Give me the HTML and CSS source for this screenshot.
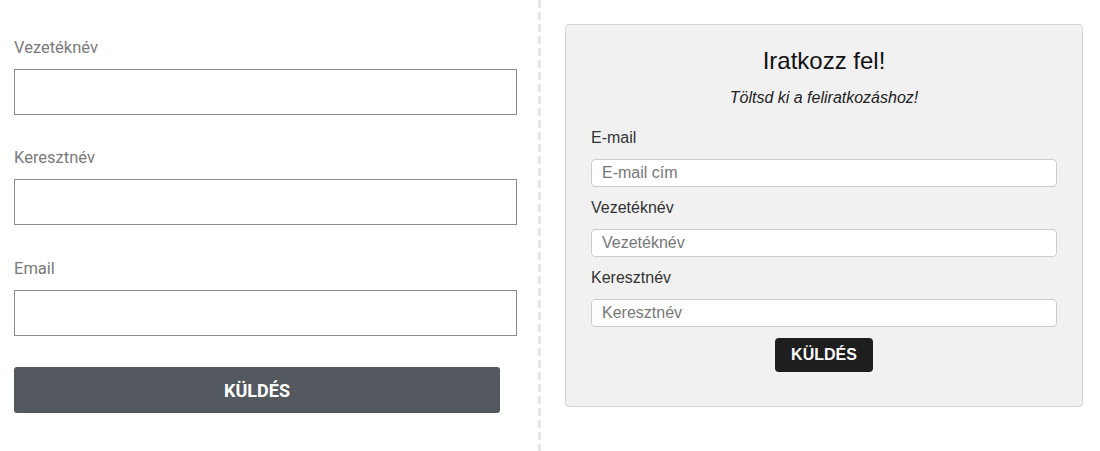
FILE: index.html
```html
<!DOCTYPE html>
<html lang="hu">
<head>
    <meta charset="UTF-8">
    <meta name="viewport" content="width=device-width, initial-scale=1.0">
    <title>Feliratkozás</title>
    <link rel="stylesheet" href="styles.css">
</head>
<body>
    <div class="page">
        <form class="plain-form">
            <div class="field">
                <label for="lastName">Vezetéknév</label>
                <input type="text" id="lastName">
            </div>
            <div class="field">
                <label for="firstName">Keresztnév</label>
                <input type="text" id="firstName">
            </div>
            <div class="field">
                <label for="email">Email</label>
                <input type="email" id="email">
            </div>
            <button type="submit" class="send-btn">KÜLDÉS</button>
        </form>

        <div class="divider"></div>

        <div class="signup-wrap">
            <form class="signup">
                <h2>Iratkozz fel!</h2>
                <p class="lead">Töltsd ki a feliratkozáshoz!</p>

                <label for="suEmail">E-mail</label>
                <input type="email" id="suEmail" placeholder="E-mail cím">

                <label for="suLast">Vezetéknév</label>
                <input type="text" id="suLast" placeholder="Vezetéknév">

                <label for="suFirst">Keresztnév</label>
                <input type="text" id="suFirst" placeholder="Keresztnév">

                <button type="submit" class="signup-btn">KÜLDÉS</button>
            </form>
        </div>
    </div>
</body>
</html>
```

FILE: styles.css
```css
* { box-sizing: border-box; }
body { margin: 0; background: #fff; }
.page { display: flex; min-height: 100vh; }

/* left form */
.plain-form { width: 538px; padding: 36px 21px 0 14px; font-family: Roboto, "Liberation Sans", sans-serif; }
.field { margin-bottom: 31px; }
.field:nth-child(2) { margin-bottom: 32px; }
.field label { display: block; font-size: 16.5px; line-height: 24px; color: #7a7a7a; margin-bottom: 9px; }
.field input { display: block; width: 100%; height: 46px; border: 1px solid #8a8a8a; border-radius: 0; padding: 0 12px; font-size: 16px; }
.send-btn { display: block; width: 486px; height: 46px; margin-top: 0; background: #54595f; color: #fff; border: none; border-radius: 3px; font-family: Roboto, "Liberation Sans", sans-serif; font-size: 18px; font-weight: 700; cursor: pointer; }

/* divider */
.divider { width: 3px; flex-shrink: 0; background: repeating-linear-gradient(to bottom, #e6e6e6 0 8px, transparent 8px 12px); }

/* right form */
.signup-wrap { padding: 24px 0 0 24px; }
.signup { width: 518px; padding: 22px 25px 34px; background: #f1f1f1; border: 1px solid #d3d3d3; border-radius: 4px; font-family: "Liberation Sans", Arial, sans-serif; color: #222; }
.signup h2 { margin: 0 0 14px; font-size: 24px; line-height: 28px; font-weight: 400; text-align: center; color: #111; }
.signup .lead { margin: 0 0 22px; font-size: 16px; line-height: 18px; font-style: italic; text-align: center; }
.signup label { display: block; font-size: 16px; line-height: 18px; color: #333; margin-bottom: 12px; }
.signup input { display: block; width: 100%; height: 28px; padding: 4px 10px; margin-bottom: 12px; font-family: "Liberation Sans", Arial, sans-serif; font-size: 16px; line-height: 18px; border: 1px solid #ccc; border-radius: 4px; background: #fff; }
.signup input::placeholder { color: #777; }
.signup-btn { display: block; margin: -1px auto 0; height: 34px; padding: 0 16.5px; background: #1e1e1e; color: #fff; border: none; border-radius: 4px; font-family: "Liberation Sans", Arial, sans-serif; font-size: 16px; font-weight: 700; cursor: pointer; }
```
